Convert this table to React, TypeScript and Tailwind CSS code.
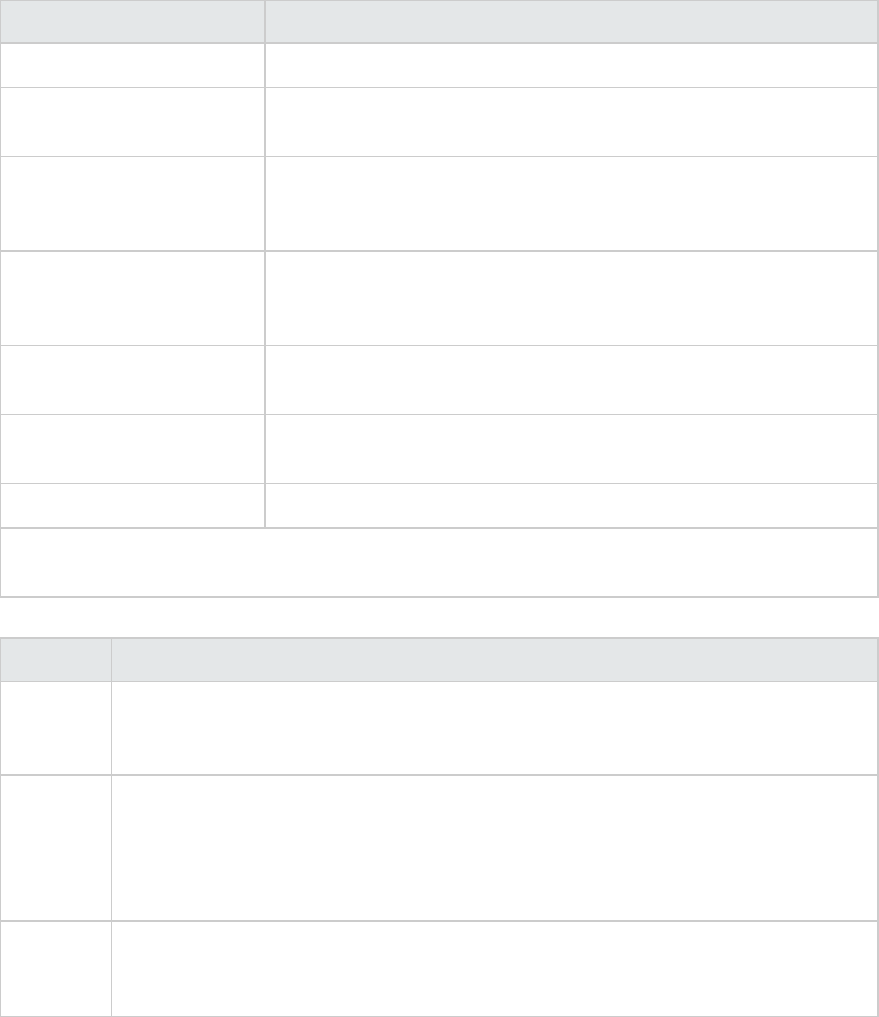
import React from "react";

const B = "border-[#cccccc]";

function Row({ h, first, thick, header, full }: { h: string; first: string; thick?: boolean; header?: boolean; full?: boolean }) {
  return (
    <div className={`flex ${h} ${thick ? "border-b-2" : "border-b"} ${B} ${header ? "bg-[#e4e7e8]" : "bg-white"}`}>
      {full ? (
        <div className="flex-1" />
      ) : (
        <>
          <div className={`${first} shrink-0 border-r-2 ${B}`} />
          <div className="flex-1" />
        </>
      )}
    </div>
  );
}

function Row2({ h, header, thick }: { h: string; header?: boolean; thick?: boolean }) {
  return (
    <div className={`flex ${h} ${thick ? "border-b-2" : "border-b"} ${B} ${header ? "bg-[#e4e7e8]" : "bg-white"}`}>
      <div className={`w-[111px] shrink-0 border-r ${B}`} />
      <div className="flex-1" />
    </div>
  );
}

export default function App() {
  return (
    <div className="w-[879px] h-[1017px] bg-white overflow-hidden" style={{ fontFamily: "'Liberation Sans', Arial, sans-serif" }}>
      <div className={`w-[879px] border-t border-l border-r-2 ${B}`}>
        <Row h="h-[43px]" first="w-[265px]" header thick />
        <Row h="h-[44px]" first="w-[265px]" />
        <Row h="h-[69px]" first="w-[265px]" />
        <Row h="h-[95px]" first="w-[265px]" thick />
        <Row h="h-[94px]" first="w-[265px]" />
        <Row h="h-[69px]" first="w-[265px]" />
        <Row h="h-[69px]" first="w-[265px]" />
        <Row h="h-[45px]" first="w-[265px]" thick />
        <Row h="h-[69px]" first="w-[265px]" full thick />
      </div>
      <div className={`mt-[39px] w-[879px] border-t-2 border-l border-r-2 ${B}`}>
        <Row2 h="h-[43px]" header />
        <Row2 h="h-[94px]" thick />
        <Row2 h="h-[146px]" thick />
        <Row2 h="h-[96px]" thick />
      </div>
    </div>
  );
}
